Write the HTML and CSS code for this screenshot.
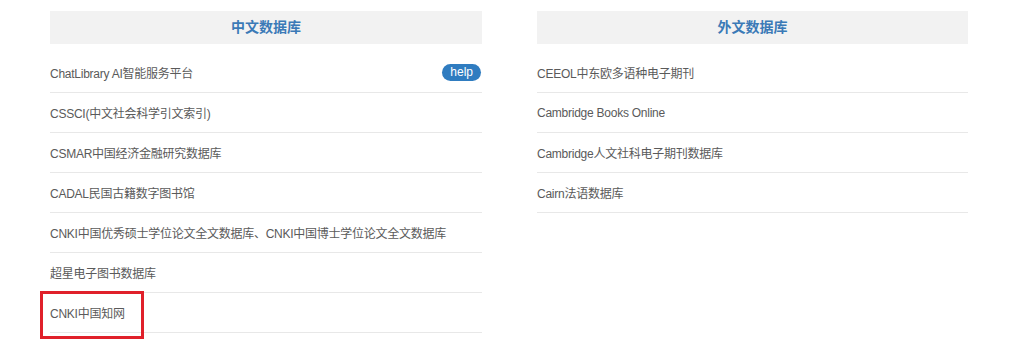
FILE: index.html
```html
<!DOCTYPE html>
<html lang="zh-CN">
<head>
    <meta charset="UTF-8">
    <title>数据库导航</title>
    <link rel="stylesheet" href="styles.css">
</head>
<body>
    <main class="db-wrap">
        <section class="db-col">
            <h2 class="db-title">中文数据库</h2>
            <ul class="db-list">
                <li><a href="#">ChatLibrary AI智能服务平台</a><span class="help-tag">help</span></li>
                <li><a href="#">CSSCI(中文社会科学引文索引)</a></li>
                <li><a href="#">CSMAR中国经济金融研究数据库</a></li>
                <li><a href="#">CADAL民国古籍数字图书馆</a></li>
                <li><a href="#">CNKI中国优秀硕士学位论文全文数据库、CNKI中国博士学位论文全文数据库</a></li>
                <li><a href="#">超星电子图书数据库</a></li>
                <li class="marked"><a href="#">CNKI中国知网</a></li>
            </ul>
        </section>
        <section class="db-col">
            <h2 class="db-title">外文数据库</h2>
            <ul class="db-list">
                <li><a href="#">CEEOL中东欧多语种电子期刊</a></li>
                <li><a href="#">Cambridge Books Online</a></li>
                <li><a href="#">Cambridge人文社科电子期刊数据库</a></li>
                <li><a href="#">Cairn法语数据库</a></li>
            </ul>
        </section>
    </main>
</body>
</html>
```

FILE: styles.css
```css
* { box-sizing: border-box; }
body { margin: 0; background: #fff; font-family: "Liberation Sans", "Noto Sans CJK SC", sans-serif; font-size: 12px; color: #5a5a5a; }
.db-wrap { display: grid; grid-template-columns: 432px 431px; column-gap: 55px; padding: 11px 0 13px 50px; }
.db-title { margin: 0 0 9px; height: 33px; line-height: 33px; background: #f2f2f2; text-align: center; font-size: 14px; font-weight: 700; color: #3b7ab7; }
.db-list { list-style: none; margin: 0; padding: 0; }
.db-list li { display: flex; align-items: center; justify-content: space-between; height: 40px; border-bottom: 1px solid #e8e8e8; }
.db-list a { color: #5a5a5a; text-decoration: none; letter-spacing: -0.25px; }
.help-tag { background: #2f7cc0; color: #fff; font-size: 12px; line-height: 17px; padding: 0 8px; border-radius: 9px; margin-right: 1px; }
.marked { position: relative; }
.marked::after { content: ""; position: absolute; z-index: 2; left: -10px; top: -2px; width: 98px; height: 42px; border: 3px solid #e0202a; }
```
